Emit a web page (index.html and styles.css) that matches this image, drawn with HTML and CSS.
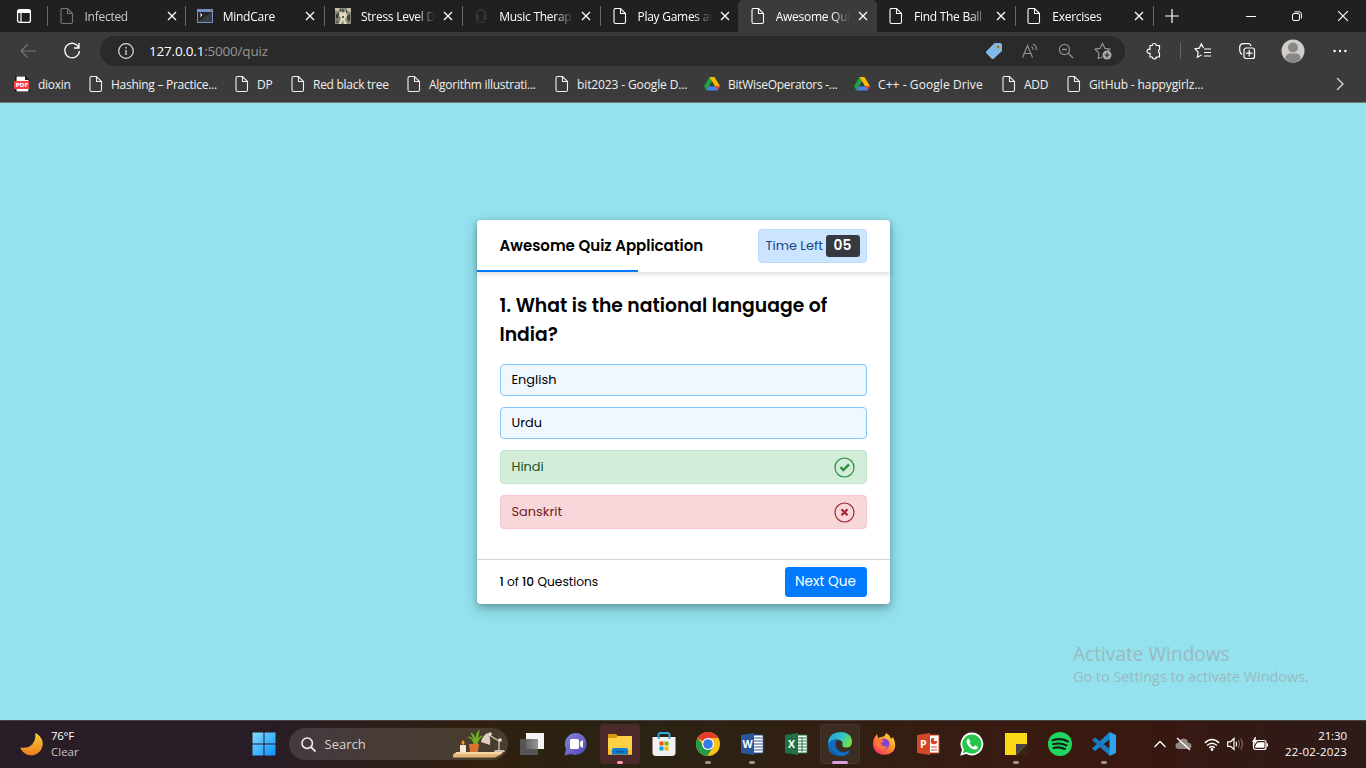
FILE: index.html
```html
<!DOCTYPE html>
<html lang="en">
<head>
<meta charset="utf-8">
<title>Awesome Quiz Application</title>
<link rel="stylesheet" href="styles.css">
</head>
<body>
<svg class="defs" width="0" height="0">
  <defs>
    <symbol id="doc" viewBox="0 0 16 18"><path d="M2.500 1.500h6l5 5v8.500a1.500 1.500 0 0 1-1.500 1.500H3.500A1.500 1.500 0 0 1 2 15V3A1.500 1.500 0 0 1 3.500 1.500M8.500 1.500V6.500H13.500" fill="none" stroke="currentColor" stroke-width="1.100"/></symbol>
    <symbol id="x" viewBox="0 0 10 10"><path d="M1 1l8 8M9 1L1 9" stroke="currentColor" stroke-width="1.300" fill="none"/></symbol>
    <symbol id="drive" viewBox="0 0 16 14"><path d="M5.500 0h5L5 9.500 2.600 13.500 0 9.300z" fill="#1ea446"/><path d="M5.500 0h5L16 9.300h-5z" fill="#ffba00"/><path d="M5.100 9.300H16l-2.600 4.200H2.600z" fill="#4285f4"/><path d="M11 9.300h5l-2.600 4.200z" fill="#ea4335"/><path d="M8 4.800l2.600 4.500H5.300z" fill="#3b3b3b"/></symbol>
  </defs>
</svg>

<header class="browser">
  <div class="tabstrip">
    <div class="tab-menu"><svg width="16" height="16" viewBox="0 0 16 16"><rect x="1.600" y="1.600" width="12.800" height="12.800" rx="2" fill="none" stroke="#fff" stroke-width="1.300"/><path d="M1.500 2h13v3h-13z" fill="#fff"/><path d="M5 5v9" stroke="#fff" stroke-width="1.200"/></svg></div>
    <div class="tab tab-dim"><svg class="fav"><use href="#doc"/></svg><span class="tab-title">Infected</span><svg class="close"><use href="#x"/></svg></div>
    <div class="tab"><svg class="fav" viewBox="0 0 16 18"><rect x="0" y="2" width="16" height="14" fill="#6f93c9"/><rect x="1" y="5" width="14" height="10" fill="#26282b"/><path d="M1 15L15 5v10z" fill="#3a3c3f"/><path d="M3 6.500l2 1.500-2 1.500" stroke="#fff" fill="none"/><path d="M13 3h2v1h-2z" fill="#e14b3b"/></svg><span class="tab-title">MindCare</span><svg class="close"><use href="#x"/></svg></div>
    <div class="tab"><svg class="fav" viewBox="0 0 16 18"><path d="M0 1h16v16H0z" fill="#8d8b78"/><path d="M0 1h4v3H0zM12 1h4v4h-4z" fill="#c5bda0"/><path d="M5 4l3 2 3-2 1 5-2 3 2 5H9l-1-4-2 4H4l2-6-2-3z" fill="#e2dac2"/><path d="M1 7l3-1-1 6-2-1zM12 9l3-2v6l-2 2zM5 2l2 1-2 2zM11 3l2 2-2 1z" fill="#373d36"/><path d="M7 2h2v3H7zM1 14l2-1v3H1zM7 9h2v2H7z" fill="#59594d"/></svg><span class="tab-title">Stress Level D</span><svg class="close"><use href="#x"/></svg></div>
    <div class="tab"><svg class="fav" viewBox="0 0 16 18"><path d="M3.500 10V7.500a4.500 4.500 0 0 1 9 0V10" fill="none" stroke="#3c3c3c" stroke-width="1.300"/><path d="M3 8h2.500v5H3zM10.500 8H13v5h-2.500zM4 14.500h8v1H4z" fill="#393939"/></svg><span class="tab-title">Music Therapy</span><svg class="close"><use href="#x"/></svg></div>
    <div class="tab"><svg class="fav"><use href="#doc"/></svg><span class="tab-title">Play Games an</span><svg class="close"><use href="#x"/></svg></div>
    <div class="tab tab-active"><svg class="fav"><use href="#doc"/></svg><span class="tab-title">Awesome Quiz</span><svg class="close"><use href="#x"/></svg></div>
    <div class="tab"><svg class="fav"><use href="#doc"/></svg><span class="tab-title">Find The Ball</span><svg class="close"><use href="#x"/></svg></div>
    <div class="tab"><svg class="fav"><use href="#doc"/></svg><span class="tab-title">Exercises</span><svg class="close"><use href="#x"/></svg></div>
    <i class="tab-end"></i>
    <svg class="new-tab" width="14" height="14" viewBox="0 0 14 14"><path d="M7 0v14M0 7h14" stroke="#fff" stroke-width="1.200"/></svg>
    <div class="window-buttons">
      <svg width="10" height="10" viewBox="0 0 10 10"><path d="M0 5.500h10" stroke="#fff"/></svg>
      <svg width="10" height="10" viewBox="0 0 10 10"><rect x=".5" y="2.500" width="7" height="7" rx="1.500" fill="none" stroke="#fff"/><path d="M2.500.8H7A2.300 2.300 0 0 1 9.400 3v4.500" fill="none" stroke="#fff"/></svg>
      <svg width="10" height="10" viewBox="0 0 10 10"><path d="M0 0l10 10M10 0L0 10" stroke="#fff" stroke-width="1.200"/></svg>
    </div>
  </div>

  <div class="toolbar">
    <svg class="back" width="16" height="14" viewBox="0 0 16 14"><path d="M16 7H1M7.500.5L1 7l6.500 6.500" fill="none" stroke="#797979" stroke-width="1.200"/></svg>
    <svg class="reload" width="18" height="18" viewBox="0 0 18 18"><path d="M15.500 5A7.300 7.300 0 1 0 16.400 9M16 1v5h-5" fill="none" stroke="#fff" stroke-width="1.300"/></svg>
    <div class="omnibox">
      <svg width="16" height="16" viewBox="0 0 16 16"><circle cx="8" cy="8" r="7.300" fill="none" stroke="#dcdcdc" stroke-width="1.200"/><path d="M8 7v5M8 4v1.500" stroke="#dcdcdc" stroke-width="1.300"/></svg>
      <span class="url">127.0.0.1<span class="url-rest">:5000/quiz</span></span>
      <div class="omni-icons">
        <svg width="16" height="16" viewBox="0 0 16 16"><path d="M8.500 0H14.500L16 1.500V8L8 15.400a2 2 0 0 1-2.500 0L.6 10.500a1.800 1.800 0 0 1 0-2.600z" fill="#7fb8ea"/><circle cx="12.200" cy="3.900" r="1.900" fill="#d5a51c"/><circle cx="12.200" cy="3.900" r=".8" fill="#514226"/></svg>
        <svg width="16" height="16" viewBox="0 0 16 16"><path d="M.6 14.500L5.500 2.500 10.500 14.500M2.200 10.500h6.600M9.500 3.500q1.800 1.200 1.500 3.300M11 1q4 2 3.300 6" fill="none" stroke="#8e8e8e" stroke-width="1.200"/></svg>
        <svg width="16" height="16" viewBox="0 0 16 16"><circle cx="6.500" cy="6.500" r="5.100" fill="none" stroke="#8e8e8e" stroke-width="1.200"/><path d="M4 6.500h5M10.300 10.300l4.700 4.700" stroke="#8e8e8e" stroke-width="1.300"/></svg>
        <svg width="18" height="18" viewBox="0 0 18 18"><path d="M8.500 15L4.200 16.500l.7-5.400L1 7.200l5-.8L8.500 1.500 11 6.400l5 .8-2 2" fill="none" stroke="#999" stroke-width="1.100"/><circle cx="13" cy="13" r="4.500" fill="#aaa"/><path d="M13 10.500v5M10.500 13h5" stroke="#2b2b2b" stroke-width="1.200"/></svg>
      </div>
    </div>
    <svg class="ext" width="18" height="18" viewBox="0 0 18 18"><path d="M5 3.500h2.200a2 2 0 0 1 4 0h3.300v4a2 2 0 0 0 0 3.500v4h-3.300a2 2 0 0 1-4 0H5v-4a2 2 0 1 1 0-3.500z" fill="none" stroke="#fff" stroke-width="1.200" stroke-linejoin="round"/></svg>
    <i class="tool-sep"></i>
    <svg class="favs" width="18" height="18" viewBox="0 0 18 18"><path d="M9.500 6L7.300 1.800 5.300 6.200l-4.300.7 3.200 3.300-.8 5L7.500 13M10 7h7M10 10.500h7M10 14h7" fill="none" stroke="#fff" stroke-width="1.200"/></svg>
    <svg class="coll" width="18" height="18" viewBox="0 0 18 18"><rect x="6" y="6" width="10.500" height="10.500" rx="2" fill="none" stroke="#fff" stroke-width="1.200"/><path d="M11.200 8v6.500M8 11.200h6.500M4 12.500L2.500 11Q1.500 9.500 1.700 5q.3-3 3.300-3.300L11 1.500q1.500.5 2 2.500" fill="none" stroke="#fff" stroke-width="1.200"/></svg>
    <svg class="avatar" width="24" height="24" viewBox="0 0 24 24"><circle cx="12" cy="12" r="11.500" fill="#d0cecb"/><circle cx="12" cy="8.500" r="5" fill="#8a8684"/><path d="M4 20q1-5.500 4.500-5.500h7Q19 14.500 20 20q-8 7-16 0" fill="#8a8684"/></svg>
    <svg class="dots" width="14" height="4" viewBox="0 0 14 4"><circle cx="1.600" cy="2" r="1.200" fill="#fff"/><circle cx="7" cy="2" r="1.200" fill="#fff"/><circle cx="12.400" cy="2" r="1.200" fill="#fff"/></svg>
  </div>

  <nav class="bookmarks">
    <a><svg class="bm-icon" viewBox="0 0 16 16"><path d="M2 0h9l4 4v12H2z" fill="#fff" stroke="#000"/><path d="M11 0v4h4" fill="#222"/><path d="M0 5h15.500v8H0z" fill="#f4403d"/><text x="1.800" y="11.200" class="pdf">PDF</text></svg><span>dioxin</span></a>
    <a><svg class="bm-icon bm-doc"><use href="#doc"/></svg><span>Hashing – Practice...</span></a>
    <a><svg class="bm-icon bm-doc"><use href="#doc"/></svg><span>DP</span></a>
    <a><svg class="bm-icon bm-doc"><use href="#doc"/></svg><span>Red black tree</span></a>
    <a><svg class="bm-icon bm-doc"><use href="#doc"/></svg><span>Algorithm illustrati...</span></a>
    <a class="bm-wide"><svg class="bm-icon bm-doc"><use href="#doc"/></svg><span>bit2023 - Google D...</span></a>
    <a><svg class="bm-icon"><use href="#drive"/></svg><span>BitWiseOperators -...</span></a>
    <a class="bm-wider"><svg class="bm-icon"><use href="#drive"/></svg><span>C++ - Google Drive</span></a>
    <a><svg class="bm-icon bm-doc"><use href="#doc"/></svg><span>ADD</span></a>
    <a class="bm-wide"><svg class="bm-icon bm-doc"><use href="#doc"/></svg><span>GitHub - happygirlz...</span></a>
    <svg class="more" width="8" height="12" viewBox="0 0 8 12"><path d="M1 0l6 6-6 6" fill="none" stroke="#ddd" stroke-width="1.300"/></svg>
  </nav>
</header>

<main class="page">
  <section class="quiz">
    <header class="quiz-head">
      <h1>Awesome Quiz Application</h1>
      <div class="timer"><span class="timer-text">Time Left</span><span class="timer-sec">05</span></div>
      <div class="time-line"></div>
    </header>
    <div class="quiz-body">
      <h2>1. What is the national language of<br>India?</h2>
      <div class="options">
        <div class="option">English</div>
        <div class="option">Urdu</div>
        <div class="option correct">Hindi<svg width="21" height="21" viewBox="0 0 21 21"><circle cx="10.500" cy="10.500" r="9.500" fill="none" stroke="#23903c" stroke-width="1.200"/><path d="M6.500 10l2.800 3L15 7.400" fill="none" stroke="#23903c" stroke-width="2.300"/></svg></div>
        <div class="option wrong">Sanskrit<svg width="21" height="21" viewBox="0 0 21 21"><circle cx="10.500" cy="10.500" r="9.500" fill="none" stroke="#a42834" stroke-width="1.200"/><path d="M7.500 7.200l6 6M13.500 7.200l-6 6" stroke="#a42834" stroke-width="2.200"/></svg></div>
      </div>
    </div>
    <footer class="quiz-foot">
      <span class="total"><b>1</b> of <b>10</b> Questions</span>
      <button class="next">Next Que</button>
    </footer>
  </section>
  <div class="activate"><div class="act-title">Activate Windows</div><div class="act-sub">Go to Settings to activate Windows.</div></div>
</main>

<footer class="taskbar">
  <div class="weather">
    <svg width="23" height="23" viewBox="0 0 23 23"><defs><linearGradient id="moon" x2="0" y2="1"><stop stop-color="#f8cf3b"/><stop offset="1" stop-color="#f07c1c"/></linearGradient></defs><path d="M15 0A11.500 11.500 0 1 1 .3 14.500Q8 16 12.500 11 16.500 6 15 0" fill="url(#moon)"/></svg>
    <div><div class="temp">76°F</div><div class="cond">Clear</div></div>
  </div>
  <svg class="start" width="24" height="24" viewBox="0 0 24 24"><defs><linearGradient id="win" x2="1" y2="1"><stop stop-color="#83dcff"/><stop offset="1" stop-color="#0a91fb"/></linearGradient></defs><path d="M.5.5h11v11H.5zM12.500.5h11v11h-11zM.5 12.500h11v11H.5zM12.500 12.500h11v11h-11z" fill="url(#win)"/></svg>
  <div class="search">
    <svg width="15" height="15" viewBox="0 0 15 15"><circle cx="6.200" cy="6.200" r="5.200" fill="none" stroke="#eee" stroke-width="1.600"/><path d="M10 10l4.500 4.500" stroke="#eee" stroke-width="1.800"/></svg>
    <span>Search</span>
    <svg class="lamp" width="52" height="28" viewBox="0 0 52 28"><path d="M4 22h46l-3 3-5 2.500H0v-3z" fill="#e4b577"/><path d="M4 22h46l-2 2H1z" fill="#f7d9a6"/><path d="M7 15h6v7H7z" fill="#f4e5d4"/><path d="M10 10q3 3 0 5-3-2 0-5" fill="#ff9c21"/><path d="M16 14h10l-1 8h-8z" fill="#d9722e"/><path d="M21 14Q20 7 15 7q5 1 6 7 0-8-3-11 5 3 4 11 1-10 4-13-1 5-3 13 2-7 6-8-4 3-5 8" fill="#7dbb28" stroke="#6fb01f" stroke-width="1.200"/><path d="M36 5l10 6v11M37 4l-3 3" fill="none" stroke="#d7c8be" stroke-width="1.300"/><path d="M34 3q4 2 3 12l-9-3q1-5 6-9" fill="#dfcec1"/><circle cx="37" cy="4" r="1.800" fill="#efe1d6"/><circle cx="47" cy="10" r="1.800" fill="#efe1d6"/><path d="M42 20h9l1 2H41z" fill="#d1beb0"/></svg>
  </div>
  <div class="apps">
    <div class="app"><svg viewBox="0 0 24 24"><defs><linearGradient id="tv" x2="1"><stop stop-color="#666"/><stop offset="1" stop-color="#969696"/></linearGradient></defs><path d="M6 1h18v16H6z" fill="#f4f4f4"/><path d="M0 7h18v16H0z" fill="#555"/><path d="M6 7h12v10H6z" fill="url(#tv)"/></svg></div>
    <div class="app"><svg viewBox="0 0 24 24"><defs><linearGradient id="chat" x2="1" y2="1"><stop stop-color="#7e83d6"/><stop offset=".55" stop-color="#7164c9"/><stop offset="1" stop-color="#4146b7"/></linearGradient></defs><path d="M12 1a11 11 0 1 1-5 21L.5 23.500 2 17A11 11 0 0 1 12 1" fill="url(#chat)"/><rect x="6" y="7" width="9" height="10" rx="1.500" fill="#fff"/><path d="M16 10l3-2v8l-3-2z" fill="#fff"/></svg></div>
    <div class="app app-attn"><svg viewBox="0 0 24 24"><path d="M0 2h8l3 3-3 3H0z" fill="#d99a10"/><path d="M0 6h8l2-2h14v18.500H0z" fill="#ffcf45"/><path d="M0 18h24v4.500H0z" fill="#f9c02d"/><path d="M4 18q0-2 2-2h12q2 0 2 2v4.500H4z" fill="#0e7cd1"/><path d="M8 19h8v1.500H8z" fill="#075a9f"/></svg><i></i></div>
    <div class="app"><svg viewBox="0 0 24 24"><path d="M6.500 7V3q0-2 2-2h7q2 0 2 2v4" fill="none" stroke="#35ace6" stroke-width="1.800"/><path d="M.5 5h23v15.500q0 3.500-3.500 3.500H4Q.5 24 .5 20.500z" fill="#f1f1f1"/><path d="M6.500 5h1.500v2H5.700V5zM16.500 5h1.800v2h-1.800z" fill="#35ace6"/><path d="M7.500 9.500h4v4h-4z" fill="#ef4e23"/><path d="M12.500 9.500h4v4h-4z" fill="#7db600"/><path d="M7.500 14.500h4v4h-4z" fill="#009fea"/><path d="M12.500 14.500h4v4h-4z" fill="#fbb500"/></svg></div>
    <div class="app"><svg viewBox="0 0 24 24"><circle cx="12" cy="12" r="12" fill="#fbc116"/><path d="M12 12L1.600 6A12 12 0 0 1 22.400 6H12z" fill="#e33b2e"/><path d="M1.600 6A12 12 0 0 0 11.500 24L17 15 8 14z" fill="#229a4b"/><circle cx="12" cy="12" r="6" fill="#fff"/><circle cx="12" cy="12" r="4.800" fill="#3979e8"/></svg><i></i></div>
    <div class="app"><svg viewBox="0 0 24 24"><path d="M12 3h11v18H12z" fill="#fff" stroke="#2c569a"/><path d="M14 6h8M14 9h8M14 12h8M14 15h8M14 18h8" stroke="#2b5797"/><path d="M1 3l13-2v22L1 21z" fill="#2b579a"/><text x="2.500" y="16" class="glyph">W</text></svg><i></i></div>
    <div class="app"><svg viewBox="0 0 24 24"><path d="M12 3h11v18H12z" fill="#fff" stroke="#217346"/><path d="M14 6h8M14 9h8M14 12h8M14 15h8M14 18h8M18 5v15" stroke="#217346"/><path d="M1 3l13-2v22L1 21z" fill="#217346"/><text x="4" y="16" class="glyph">X</text></svg></div>
    <div class="app app-current"><svg viewBox="0 0 24 24"><defs><linearGradient id="e1" x2="1" y2=".4"><stop stop-color="#219de4"/><stop offset=".6" stop-color="#31c4ca"/><stop offset="1" stop-color="#6dde4c"/></linearGradient><linearGradient id="e2" x2="1" y2="1"><stop stop-color="#0875ca"/><stop offset="1" stop-color="#125093"/></linearGradient></defs><path d="M0 10Q2 0 12.500 0 24 .5 24 10q0 5.500-6 5.500-4.500 0-3.500-3 1-4-5-5Q4 7 0 12z" fill="url(#e1)"/><path d="M0 12q4-6 10-4.500-3 2-2.500 6Q9 20 16 20q4 0 6-2-3 6-10 6Q0 24 0 12" fill="url(#e2)"/><path d="M10 8q-5 2-2.500 8 3 6 10 4 3-.5 4.500-2-2 6-9 6Q5 22 4 15q0-6 6-7" fill="#176cc0"/></svg><i></i></div>
    <div class="app"><svg viewBox="0 0 24 24"><defs><linearGradient id="ff" x1="1" x2=".2" y2="1"><stop stop-color="#fff14a"/><stop offset=".45" stop-color="#ff9a28"/><stop offset="1" stop-color="#f52c63"/></linearGradient></defs><path d="M14 1q4 2 5 6l2-2q6 13-4 17-10 3-15-5-3-8 3-15l1 4 3-1q4 0 5-4" fill="url(#ff)"/><circle cx="12" cy="12" r="5.500" fill="#8542d7"/><path d="M3 9q5-4 9 0l-3 2q1 5 7 3-3 5-8 3-5-2-5-8" fill="#ff7839"/></svg></div>
    <div class="app"><svg viewBox="0 0 24 24"><path d="M12 3h11v18H12z" fill="#fff" stroke="#d24726"/><path d="M15 15h6M15 18h6" stroke="#d24726"/><circle cx="18" cy="9" r="3.300" fill="#d24726"/><path d="M18 9V5h4v4z" fill="#fff"/><path d="M1 3l13-2v22L1 21z" fill="#d24726"/><text x="4" y="16" class="glyph">P</text></svg></div>
    <div class="app"><svg viewBox="0 0 24 24"><path d="M12 1.500a10.500 10.500 0 1 1-5.500 19.500L1.500 22.500 3 17.500A10.500 10.500 0 0 1 12 1.500" fill="#25c64b" stroke="#fff" stroke-width="1.800"/><path d="M8.500 6.500l2 3-1 1.800q1.500 2.700 4 3.700l1.500-1.700 3 1.700q-.5 3-3.500 2.500-6-1-8-7.500Q6.500 7 8.500 6.500" fill="#fff"/></svg></div>
    <div class="app"><svg viewBox="0 0 24 24"><path d="M1 1h22v22H1z" fill="#fdd817"/><path d="M12 12h11L12 23z" fill="#444"/><path d="M23 12v11H12z" fill="#382415"/></svg><i></i></div>
    <div class="app"><svg viewBox="0 0 24 24"><circle cx="12" cy="12" r="12" fill="#1ed760"/><path d="M4.500 8.300Q13 5.500 20 9.500M5 12.200q7.500-2 13.500 1.300M5.500 16q6-1.700 11.500 1" fill="none" stroke="#102515" stroke-width="2.100" stroke-linecap="round"/></svg></div>
    <div class="app"><svg viewBox="0 0 24 24"><path d="M18 0v7L3 19l-3-2.500L17 .5z" fill="#1685cf"/><path d="M0 8l3-2.500L18 17v7L0 8" fill="#1b78bc"/><path d="M17.500 0L24 3v18l-6.500 3z" fill="#2ca5f1"/></svg><i></i></div>
  </div>
  <div class="tray">
    <svg class="t-up" width="12" height="8" viewBox="0 0 12 8"><path d="M.5 7L6 1.500 11.500 7" fill="none" stroke="#fff" stroke-width="1.300"/></svg>
    <svg class="t-cloud" width="17" height="14" viewBox="0 0 17 14"><path d="M4 12q-3.500 0-3.500-3.200Q.5 6 3.500 5.500 5 1.500 8.500 1.500q4 0 4.500 4.200 3.500.3 3.500 3.300T13 12z" fill="#938986"/><path d="M2 1l13 12" stroke="#fff" stroke-width="1.300"/></svg>
    <svg class="t-wifi" width="16" height="13" viewBox="0 0 16 13"><path d="M.8 5Q8-2 15.200 5M3 7.500q5-4.700 10 0M5.200 9.800q2.800-2.500 5.600 0" fill="none" stroke="#fff" stroke-width="1.400"/><circle cx="8" cy="11.500" r="1.400" fill="#fff"/></svg>
    <svg class="t-vol" width="16" height="14" viewBox="0 0 16 14"><path d="M.7 4.800h2.800L7 1.500v11L3.500 9.300H.7zM9 4.800q1.500 2.200 0 4.500" fill="none" stroke="#fff" stroke-width="1.200"/><path d="M11 3q3 4 0 8M13.500 1.500q4 5.500 0 11" fill="none" stroke="#786762" stroke-width="1.200"/></svg>
    <svg class="t-bat" width="17" height="14" viewBox="0 0 17 14"><rect x="1.500" y="3.500" width="12.500" height="9" rx="2" fill="none" stroke="#fff" stroke-width="1.200"/><path d="M5.500 5.300h7v5.500H3.200V9zM14.500 6.500H16v3h-1.500zM3 0L0 5h2.500L2 8.500 6 3H3.500L4 0z" fill="#fff"/></svg>
    <div class="clock"><div>21:30</div><div class="date">22-02-2023</div></div>
  </div>
</footer>
</body>
</html>
```

FILE: styles.css
```css
* { box-sizing: border-box; }
body {
  margin: 0;
  width: 1366px;
  height: 768px;
  overflow: hidden;
  display: flex;
  flex-direction: column;
  font-family: "Open Sans", "Noto Sans", sans-serif;
  font-size: 12px;
  color: #fff;
}
svg { display: block; flex: none; }
.defs { position: absolute; }

/* Browser chrome */
.browser { height: 103px; flex: none; background: #3b3b3b; border-bottom: 1px solid #777; }
.tabstrip { display: flex; height: 32px; background: #202020; align-items: center; }
.tab-menu { width: 47px; padding-left: 16px; }
.tab {
  width: 138.250px;
  height: 32px;
  display: flex;
  align-items: center;
  padding-left: 11.500px;
  background: linear-gradient(#686868, #686868) 0 6px / 1px 20px no-repeat;
}
.fav { width: 16px; height: 18px; margin-right: 10px; }
.tab-title {
  width: 74px;
  overflow: hidden;
  white-space: nowrap;
  letter-spacing: -.27px;
  -webkit-mask-image: linear-gradient(90deg, #000 76%, transparent 100%);
  mask-image: linear-gradient(90deg, #000 76%, transparent 100%);
}
.close { width: 10px; height: 10px; margin-left: 8px; }
.tab-dim .fav { color: #777; }
.tab-dim .tab-title { color: #c9c9c9; }
.tab-active { background: #3b3b3b; border-radius: 5px 5px 0 0; }
.tab-active + .tab { background: none; }
.tab-end { width: 1px; height: 20px; background: #686868; }
.new-tab { margin-left: 11px; }
.window-buttons { margin-left: auto; margin-right: 18px; display: flex; gap: 36px; }

.toolbar { display: flex; align-items: center; height: 38px; }
.back { margin-left: 20px; }
.reload { margin-left: 27px; }
.omnibox {
  width: 1025px;
  height: 30px;
  margin-left: 19px;
  padding: 0 13px 0 18px;
  border-radius: 15px;
  background: #2a2a2a;
  display: flex;
  align-items: center;
}
.url { margin-left: 15px; font-size: 13.500px; letter-spacing: -.2px; }
.url-rest { color: #969696; }
.omni-icons { margin-left: auto; display: flex; align-items: center; gap: 20px; }
.ext { margin-left: 20px; }
.tool-sep { width: 1px; height: 16px; background: #666; margin-left: 17px; }
.favs { margin-left: 13px; }
.coll { margin-left: 26px; }
.avatar { margin-left: 25px; }
.dots { margin-left: 28px; }

.bookmarks {
  height: 28px;
  padding-left: 14px;
  display: grid;
  grid-template-columns: 74px 146px 56px 116px 148px 150px 150px 147px 65px 262px 8px;
  align-items: center;
  color: #f0f0f0;
}
.bookmarks a { display: flex; align-items: center; white-space: nowrap; letter-spacing: -.27px; }
.bookmarks .bm-wide { letter-spacing: -.12px; }
.bookmarks .bm-wider { letter-spacing: .08px; }
.bm-icon { width: 16px; height: 16px; margin-right: 8px; }
.bm-doc { height: 18px; width: 16px; margin-right: 7px; }
.pdf { font: bold 5.500px "DejaVu Sans", sans-serif; letter-spacing: 0; fill: #fff; }
.more { margin-left: 8px; }

/* Quiz page */
.page { flex: 1; position: relative; background: #93e2ed; display: flex; justify-content: center; align-items: flex-start; }
.quiz {
  width: 413px;
  height: 384px;
  margin-top: 117px;
  background: #fff;
  border-radius: 4px;
  color: #000;
  font-family: Poppins, Inter, sans-serif;
  box-shadow: 0 3px 6px rgba(0,0,0,.2), 0 5px 15px rgba(0,0,0,.19);
  display: flex;
  flex-direction: column;
}
.quiz-head {
  position: relative;
  height: 52px;
  padding: 0 23px;
  display: flex;
  align-items: center;
  justify-content: space-between;
  box-shadow: 0 2px 4px 1px rgba(0,0,0,.1);
}
h1 { margin: 0; font-size: 15px; line-height: 22px; font-weight: 600; padding-bottom: 1px; }
.timer {
  width: 109px;
  height: 34px;
  padding: 0 6px 0 7px;
  display: flex;
  align-items: center;
  justify-content: space-between;
  background: #cce5ff;
  border: 1px solid #b8daff;
  border-radius: 4px;
  color: #1b4488;
}
.timer-text { font-size: 12.900px; white-space: nowrap; }
.timer-sec {
  width: 34px;
  height: 22px;
  line-height: 22px;
  border-radius: 3px;
  background: #343a40;
  color: #fff;
  font-size: 13.800px;
  font-weight: 600;
  text-align: center;
}
.time-line { position: absolute; left: 0; bottom: 0; width: 161px; height: 2px; background: #007bff; }
.quiz-body { flex: 1; padding: 19px 23px 0; }
h2 { margin: 0 0 15px; font-size: 18.770px; font-weight: 600; line-height: 29px; white-space: nowrap; }
.options { display: grid; gap: 11px; }
.option {
  height: 32px;
  padding: 0 11px;
  display: flex;
  align-items: center;
  justify-content: space-between;
  border: 1px solid #84c5fe;
  border-radius: 4px;
  background: #f0f8ff;
  font-size: 12.900px;
}
.correct { height: 34px; color: #155724; background: #d4edda; border-color: #c3e6cb; }
.wrong { height: 34px; color: #721c24; background: #f8d7da; border-color: #f5c6cb; }
.quiz-foot {
  height: 45px;
  padding: 0 23px;
  border-top: 1px solid #d3d3d3;
  display: flex;
  align-items: center;
  justify-content: space-between;
}
.total { font-size: 12.200px; }
.total b { font-weight: 500; }
.next {
  width: 82px;
  height: 30px;
  padding: 0;
  border: 1px solid #007bff;
  border-radius: 3px;
  background: #007bff;
  color: #fff;
  font: 13.600px Poppins, Inter, sans-serif;
}
.activate { position: absolute; left: 1073px; top: 539px; color: #9bb9be; white-space: nowrap; }
.act-title { font-size: 19.100px; line-height: 25px; }
.act-sub { font-size: 14.400px; line-height: 20px; }

/* Taskbar */
.taskbar {
  height: 48px;
  flex: none;
  display: flex;
  align-items: center;
  padding-bottom: 1px;
  border-top: 1px solid #4a4142;
  background: linear-gradient(90deg, #291d28 0, #281c26 260px, #30200f 480px, #292313 620px, #302012 800px, #381b12 1000px, #39180f 1130px, #2c1b1a 1366px);
}
.weather { width: 251.500px; padding-left: 20px; display: flex; align-items: center; gap: 8px; }
.weather, .clock { font-size: 11.500px; line-height: 16px; }
.temp { letter-spacing: -.3px; }
.cond { color: #ccc4c8; }
.search {
  width: 219px;
  height: 32px;
  margin-left: 13px;
  padding-left: 12px;
  border-radius: 16px;
  background: rgba(255,255,255,.13);
  display: flex;
  align-items: center;
  font-size: 13px;
  color: #d8d3d2;
  overflow: hidden;
}
.search span { width: 128px; margin-left: 9px; }
.apps { display: flex; gap: 4px; margin-left: 4.500px; }
.app { position: relative; width: 40px; height: 40px; border-radius: 4px; padding: 8px; }
.app svg { width: 24px; height: 24px; }
.app i { position: absolute; left: 17px; bottom: 0; width: 6px; height: 3px; border-radius: 2px; background: #9a9490; }
.app-attn { background: #4b2829; }
.app-attn i { background: #ff99a4; }
.app-current { background: #3c2d23; border: 1px solid #49382e; padding: 7px; }
.app-current i { left: 11px; width: 16px; bottom: -1px; background: #d8a0e0; }
.glyph { font: bold 10.500px "Open Sans", sans-serif; fill: #fff; }
.tray { display: flex; align-items: center; margin-left: auto; padding-right: 19px; }
.t-cloud { margin-left: 9px; }
.t-wifi { margin-left: 12px; }
.t-vol { margin-left: 7px; }
.t-bat { margin-left: 9px; }
.clock { width: 78px; text-align: right; letter-spacing: -.1px; white-space: nowrap; }
.date { letter-spacing: .2px; }
```
